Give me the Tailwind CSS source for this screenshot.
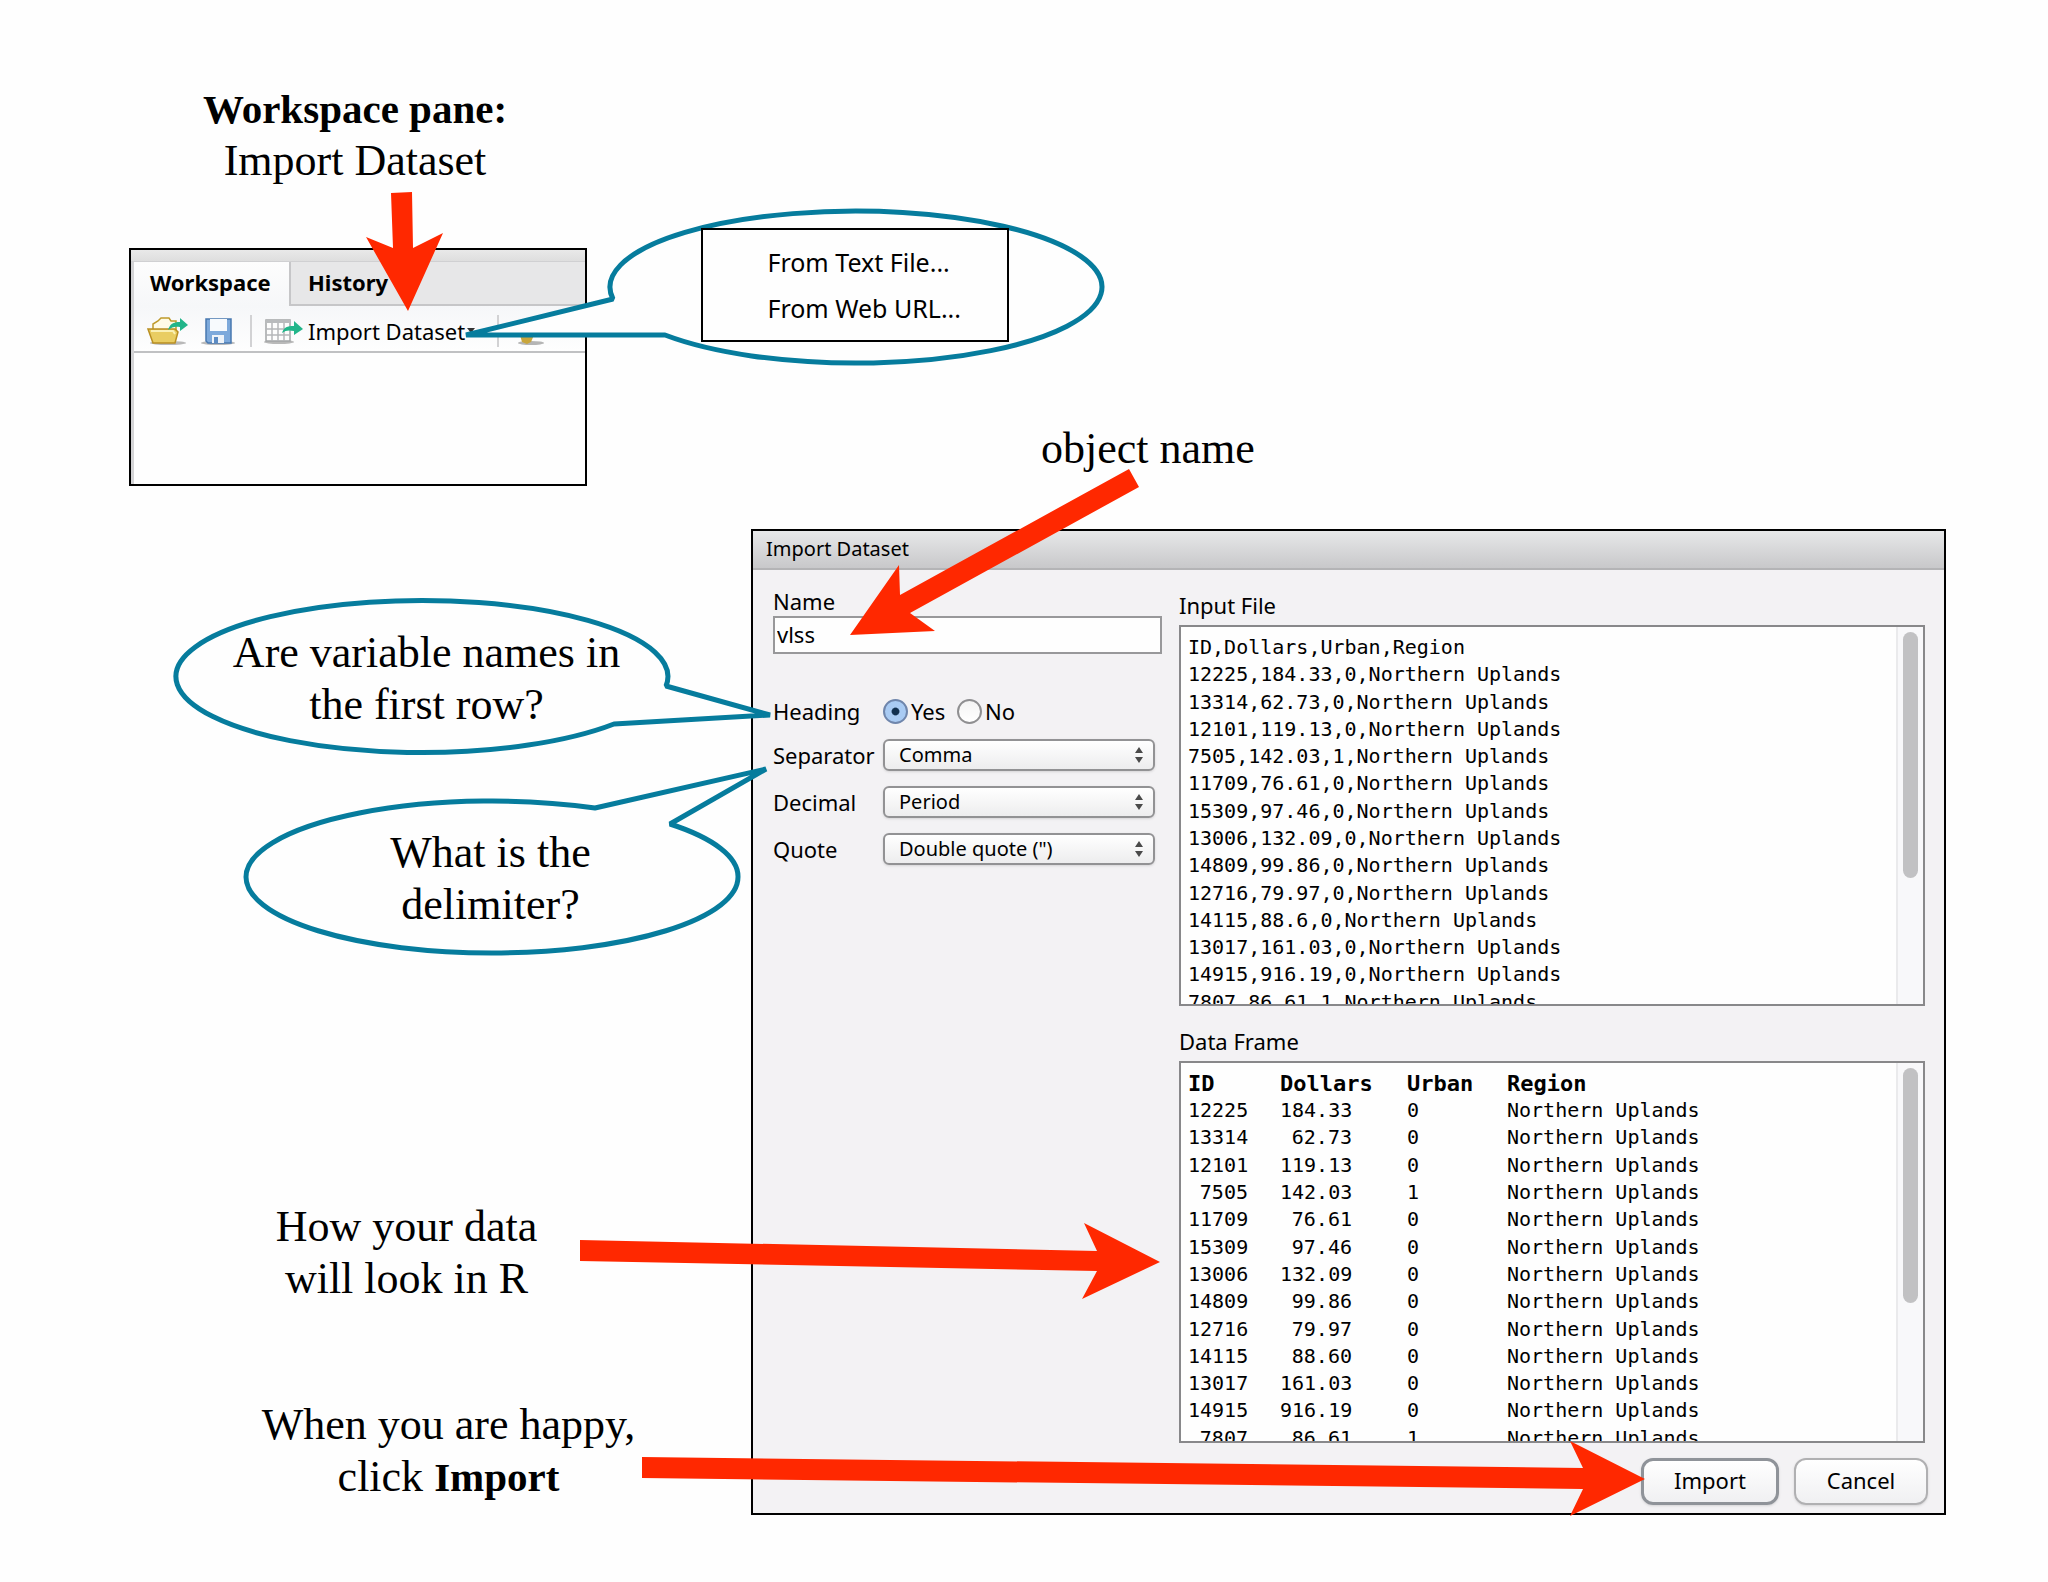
<!DOCTYPE html>
<html lang="en">
<head>
<meta charset="utf-8">
<meta name="viewport" content="width=device-width, initial-scale=1">
<title>Import Dataset</title>
<script src="https://cdn.jsdelivr.net/npm/@tailwindcss/browser@4"></script>
</head>
<body class="bg-[#fefefe] text-black">
<main class="relative pt-[83px] pb-[67px] font-['Palatino','Liberation_Serif',serif] text-[44px] leading-[52px]">

  <!-- Workspace pane -->
  <section class="grid h-[446px] grid-cols-[751fr_1195fr_102fr]">
    <div>
      <h1 class="pr-[41px] text-center"><strong class="text-[41px]">Workspace pane:</strong><br>Import Dataset</h1>
      <div class="mt-[61px] mr-[164px] ml-[129px] h-[238px] overflow-hidden border-2 border-black bg-[#fefefe] font-['Lucida_Grande','Noto_Sans',sans-serif] text-[22px] leading-[28px]">
        <div class="h-3 border-b border-[#d0d0d2] bg-linear-to-b from-[#e9e9e9] to-[#dedede]"></div>
        <div class="h-[222px] border-l-3 border-[#d4d4d6]">
          <div class="flex h-[44px] bg-[#e7e7e8] font-bold">
            <button type="button" class="h-full w-[155px] bg-linear-to-b from-[#fdfdfd] to-[#f6f7f9] pb-1 pl-[16px] text-left">Workspace</button>
            <button type="button" class="h-full flex-1 border-b-2 border-l-2 border-[#c6c6c8] pb-[2px] pl-[17px] text-left">History</button>
          </div>
          <div class="flex h-[47px] items-center border-b-2 border-[#c0c1c3] bg-linear-to-b from-[#f6f7f9] to-[#fefefe] pt-1 pl-[13px]">
            <button type="button" aria-label="Open workspace">
              <svg class="h-8 w-[42px]" viewBox="0 0 42 32">
                <ellipse cx="21" cy="28" rx="18" ry="2" fill="#b9b9b9"/>
                <path d="M6 24V9l5-3 3-3h8l2 3h5v9" fill="#fffbe6" stroke="#bf9a2c" stroke-width="1.5"/>
                <path d="M1 14h27l3 3-3 11H6z" fill="#e9cd62" stroke="#b98f22" stroke-width="1.5"/>
                <path d="M4 16h22l2 3" fill="none" stroke="#faf0b4" stroke-width="2"/>
                <path d="M21 15c2-6 5-8 12-8V3l8 7-8 6v-4c-5-1-8 0-12 3z" fill="#22b58a"/>
              </svg>
            </button>
            <button type="button" aria-label="Save workspace" class="ml-3">
              <svg class="h-8 w-[36px]" viewBox="0 0 36 32">
                <ellipse cx="17" cy="28" rx="17" ry="2" fill="#b9b9b9"/>
                <path d="M5 4h25v24H7l-2-2z" fill="#7da9db" stroke="#4878b0" stroke-width="1.5"/>
                <path d="M9 4h17v12H9z" fill="#f7fafd"/>
                <path d="M11 20h12v8H11z" fill="#eef3f9"/>
                <path d="M13 22h4v6h-4z" fill="#5c8cc4"/>
              </svg>
            </button>
            <span class="ml-[13px] h-8 w-[2px] bg-[#d2d2d4]"></span>
            <button type="button" class="ml-3 flex items-center">
              <svg class="h-8 w-[40px]" viewBox="0 0 40 32">
                <ellipse cx="15" cy="27" rx="15" ry="2" fill="#b9b9b9"/>
                <path d="M2 5h24v21H2z" fill="#fdfdfd" stroke="#a3a5a7" stroke-width="1.5"/>
                <path d="M2 5h24v3H2z" fill="#b9bbbd"/>
                <path d="M2 14h24M2 20h24M8 8v18M14 8v18M20 8v18" stroke="#b5b7b9" stroke-width="1.5"/>
                <path d="M18 18c2-6 5-7 12-7V6l9 8-9 6v-4c-5-1-8-1-12 2z" fill="#22b58a"/>
              </svg>
              <span class="ml-1">Import Dataset</span>
              <svg class="h-2 w-3" viewBox="0 0 12 8"><path d="M2 1h8L6 6z" fill="#333"/></svg>
            </button>
            <span class="ml-5 h-8 w-[2px] bg-[#d2d2d4]"></span>
            <svg class="ml-[16px] h-8 w-8" viewBox="0 0 32 32">
              <ellipse cx="16" cy="28" rx="13" ry="2" fill="#b5b5b5"/>
              <path d="M5 20h14l-3 7-4 2-5-2z" fill="#c9a63c"/>
            </svg>
          </div>
        </div>
      </div>
    </div>
    <p class="relative z-20 mb-[54px] ml-[290px] self-end">object name</p>
  </section>

  <!-- Notes beside the import dialog -->
  <section class="grid grid-cols-[751fr_1195fr_102fr]">
    <div class="relative z-20 pt-[98px] text-center">
      <p class="pl-[102px]">Are variable names in<br>the first row?</p>
      <p class="mt-[96px] pl-[230px]">What is the<br>delimiter?</p>
      <p class="mt-[270px] pl-[62px]">How your data<br>will look in R</p>
      <p class="mt-[94px] pl-[146px]">When you are happy,<br>click <strong class="text-[41px]">Import</strong></p>
    </div>

    <form class="h-[986px] overflow-hidden border-2 border-black bg-[#f3f2f4] font-['Lucida_Grande','Noto_Sans',sans-serif] text-[22px] leading-[28px]">
      <h2 class="h-[39px] border-b-2 border-[#b4b4b6] bg-linear-to-b from-[#e7e8e9] to-[#c8c8ca] pt-[4px] pl-[13px] text-[20px]">Import Dataset</h2>
      <div class="grid grid-cols-[389fr_746fr] gap-[17px] pr-[19px] pl-[20px]">
        <div class="pt-[17px]">
          <label for="name" class="block h-[29px]">Name</label>
          <input id="name" type="text" value="vlss" class="block h-[38px] w-full border-2 border-[#98989a] bg-[#fefefe] px-[2px] pb-[2px]">
          <fieldset class="mt-[43px] flex h-[28px] items-center">
            <legend class="float-left w-[110px]">Heading</legend>
            <input id="yes" type="radio" name="heading" checked class="size-[25px] appearance-none rounded-full border-2 border-[#6f86ac] bg-radial from-[#12304f] from-22% to-[#a9cbf3] to-30%">
            <label for="yes" class="ml-[3px] w-[46px]">Yes</label>
            <input id="no" type="radio" name="heading" class="size-[25px] appearance-none rounded-full border-2 border-[#8f8f91] bg-linear-to-b from-[#f4f4f4] to-[#ffffff]">
            <label for="no" class="ml-[3px]">No</label>
          </fieldset>
          <div class="mt-[14px] grid grid-cols-[110px_272px] items-center gap-y-[15px]">
            <label for="sep">Separator</label>
            <div class="relative h-[32px]">
              <select id="sep" class="h-full w-full appearance-none rounded-[6px] border-2 border-[#929294] bg-linear-to-b from-[#ffffff] to-[#ededee] pl-[14px] text-[20px] shadow-sm"><option>Comma</option></select>
              <svg class="pointer-events-none absolute top-[8px] right-[12px] h-4 w-2" viewBox="0 0 8 16"><path d="M0 6h8L4 0zM0 10h8l-4 6z" fill="#4a4a4a"/></svg>
            </div>
            <label for="dec">Decimal</label>
            <div class="relative h-[32px]">
              <select id="dec" class="h-full w-full appearance-none rounded-[6px] border-2 border-[#929294] bg-linear-to-b from-[#ffffff] to-[#ededee] pl-[14px] text-[20px] shadow-sm"><option>Period</option></select>
              <svg class="pointer-events-none absolute top-[8px] right-[12px] h-4 w-2" viewBox="0 0 8 16"><path d="M0 6h8L4 0zM0 10h8l-4 6z" fill="#4a4a4a"/></svg>
            </div>
            <label for="quote">Quote</label>
            <div class="relative h-[32px]">
              <select id="quote" class="h-full w-full appearance-none rounded-[6px] border-2 border-[#929294] bg-linear-to-b from-[#ffffff] to-[#ededee] pl-[14px] text-[20px] shadow-sm"><option>Double quote (")</option></select>
              <svg class="pointer-events-none absolute top-[8px] right-[12px] h-4 w-2" viewBox="0 0 8 16"><path d="M0 6h8L4 0zM0 10h8l-4 6z" fill="#4a4a4a"/></svg>
            </div>
          </div>
        </div>

        <div class="pt-[21px]">
          <h3 class="h-[34px]">Input File</h3>
          <div class="flex h-[381px] overflow-hidden border-2 border-[#88888a] bg-[#fefefe]">
            <ol class="grid h-[389px] flex-1 auto-rows-fr pt-[7px] pl-[7px] font-['DejaVu_Sans_Mono',monospace] text-[20px] leading-[27px]">
              <li>ID,Dollars,Urban,Region</li>
              <li>12225,184.33,0,Northern Uplands</li>
              <li>13314,62.73,0,Northern Uplands</li>
              <li>12101,119.13,0,Northern Uplands</li>
              <li>7505,142.03,1,Northern Uplands</li>
              <li>11709,76.61,0,Northern Uplands</li>
              <li>15309,97.46,0,Northern Uplands</li>
              <li>13006,132.09,0,Northern Uplands</li>
              <li>14809,99.86,0,Northern Uplands</li>
              <li>12716,79.97,0,Northern Uplands</li>
              <li>14115,88.6,0,Northern Uplands</li>
              <li>13017,161.03,0,Northern Uplands</li>
              <li>14915,916.19,0,Northern Uplands</li>
              <li>7807,86.61,1,Northern Uplands</li>
            </ol>
            <div class="w-[27px] border-l-2 border-[#eaeaec] bg-[#f8f8fa] pt-[5px] pl-[5px]"><div class="h-[246px] w-[15px] rounded-full bg-[#c1c1c3]"></div></div>
          </div>
          <h3 class="mt-[21px] h-[34px]">Data Frame</h3>
          <div class="flex h-[382px] items-start overflow-hidden border-2 border-[#88888a] bg-[#fefefe]">
            <div class="h-[389px] flex-1 pt-[7px] pl-[7px]">
              <table class="h-[382px] w-full table-fixed font-['DejaVu_Sans_Mono',monospace] text-[20px] leading-[27px]">
                <colgroup><col class="w-[92px]"><col class="w-[127px]"><col class="w-[100px]"><col></colgroup>
                <thead class="text-left text-[22px]"><tr><th>ID</th><th>Dollars</th><th>Urban</th><th>Region</th></tr></thead>
                <tbody>
                  <tr><td class="pr-[32px] text-right">12225</td><td class="pr-[55px] text-right">184.33</td><td>0</td><td>Northern Uplands</td></tr>
                  <tr><td class="pr-[32px] text-right">13314</td><td class="pr-[55px] text-right">62.73</td><td>0</td><td>Northern Uplands</td></tr>
                  <tr><td class="pr-[32px] text-right">12101</td><td class="pr-[55px] text-right">119.13</td><td>0</td><td>Northern Uplands</td></tr>
                  <tr><td class="pr-[32px] text-right">7505</td><td class="pr-[55px] text-right">142.03</td><td>1</td><td>Northern Uplands</td></tr>
                  <tr><td class="pr-[32px] text-right">11709</td><td class="pr-[55px] text-right">76.61</td><td>0</td><td>Northern Uplands</td></tr>
                  <tr><td class="pr-[32px] text-right">15309</td><td class="pr-[55px] text-right">97.46</td><td>0</td><td>Northern Uplands</td></tr>
                  <tr><td class="pr-[32px] text-right">13006</td><td class="pr-[55px] text-right">132.09</td><td>0</td><td>Northern Uplands</td></tr>
                  <tr><td class="pr-[32px] text-right">14809</td><td class="pr-[55px] text-right">99.86</td><td>0</td><td>Northern Uplands</td></tr>
                  <tr><td class="pr-[32px] text-right">12716</td><td class="pr-[55px] text-right">79.97</td><td>0</td><td>Northern Uplands</td></tr>
                  <tr><td class="pr-[32px] text-right">14115</td><td class="pr-[55px] text-right">88.60</td><td>0</td><td>Northern Uplands</td></tr>
                  <tr><td class="pr-[32px] text-right">13017</td><td class="pr-[55px] text-right">161.03</td><td>0</td><td>Northern Uplands</td></tr>
                  <tr><td class="pr-[32px] text-right">14915</td><td class="pr-[55px] text-right">916.19</td><td>0</td><td>Northern Uplands</td></tr>
                  <tr><td class="pr-[32px] text-right">7807</td><td class="pr-[55px] text-right">86.61</td><td>1</td><td>Northern Uplands</td></tr>
                </tbody>
              </table>
            </div>
            <div class="h-full w-[27px] border-l-2 border-[#eaeaec] bg-[#f8f8fa] pt-[5px] pl-[5px]"><div class="h-[235px] w-[15px] rounded-full bg-[#c1c1c3]"></div></div>
          </div>
          <div class="mt-[15px] -mr-[3px] flex justify-end gap-[15px]">
            <button type="button" class="h-[47px] w-[138px] rounded-[12px] border-3 border-[#8f9399] bg-linear-to-b from-[#ffffff] to-[#f0f0f2] pb-1 shadow-sm">Import</button>
            <button type="button" class="h-[47px] w-[134px] rounded-[12px] border-2 border-[#b0b0b2] bg-linear-to-b from-[#ffffff] to-[#f0f0f2] pb-1 shadow-sm">Cancel</button>
          </div>
        </div>
      </div>
    </form>
  </section>

  <!-- Speech bubbles and arrows over the panels -->
  <svg class="pointer-events-none absolute inset-0 z-10 h-full w-full" viewBox="0 0 2048 1582" preserveAspectRatio="none" aria-hidden="true">
    <g fill="#fefefe" stroke="#067c9d" stroke-width="5" stroke-linejoin="bevel">
      <path d="M613 299L466 335H665A246 76 0 1 0 613 299Z"/>
      <path d="M666 686L770 715L614 724A246 76 0 1 1 666 686Z"/>
      <path d="M595 808L766 769L670 824A246 76 0 0 1 738 877A246 76 0 0 1 246 877A246 76 0 0 1 595 808Z"/>
    </g>
    <g fill="#ff2800">
      <path d="M391 193L412 192L413 248L443 233L408 311L366 237L393 248Z"/>
      <path d="M1129 469L1139 487L910 613L935 631L850 635L899 565L900 595Z"/>
      <path d="M580 1240L1097 1251L1084 1223L1160 1262L1082 1299L1097 1271L580 1261Z"/>
      <path d="M642 1457L1583 1468L1570 1441L1645 1479L1570 1516L1583 1489L642 1478Z"/>
    </g>
  </svg>

  <!-- Import Dataset drop-down menu -->
  <ul class="absolute top-[228px] left-[34.25%] z-20 h-[114px] w-[15%] border-2 border-black bg-[#fefefe] pt-[9px] pl-[64px] font-['Lucida_Grande','Noto_Sans',sans-serif] text-[25px] leading-[46px] whitespace-nowrap">
    <li><a href="#">From Text File...</a></li>
    <li><a href="#">From Web URL...</a></li>
  </ul>
</main>
</body>
</html>
